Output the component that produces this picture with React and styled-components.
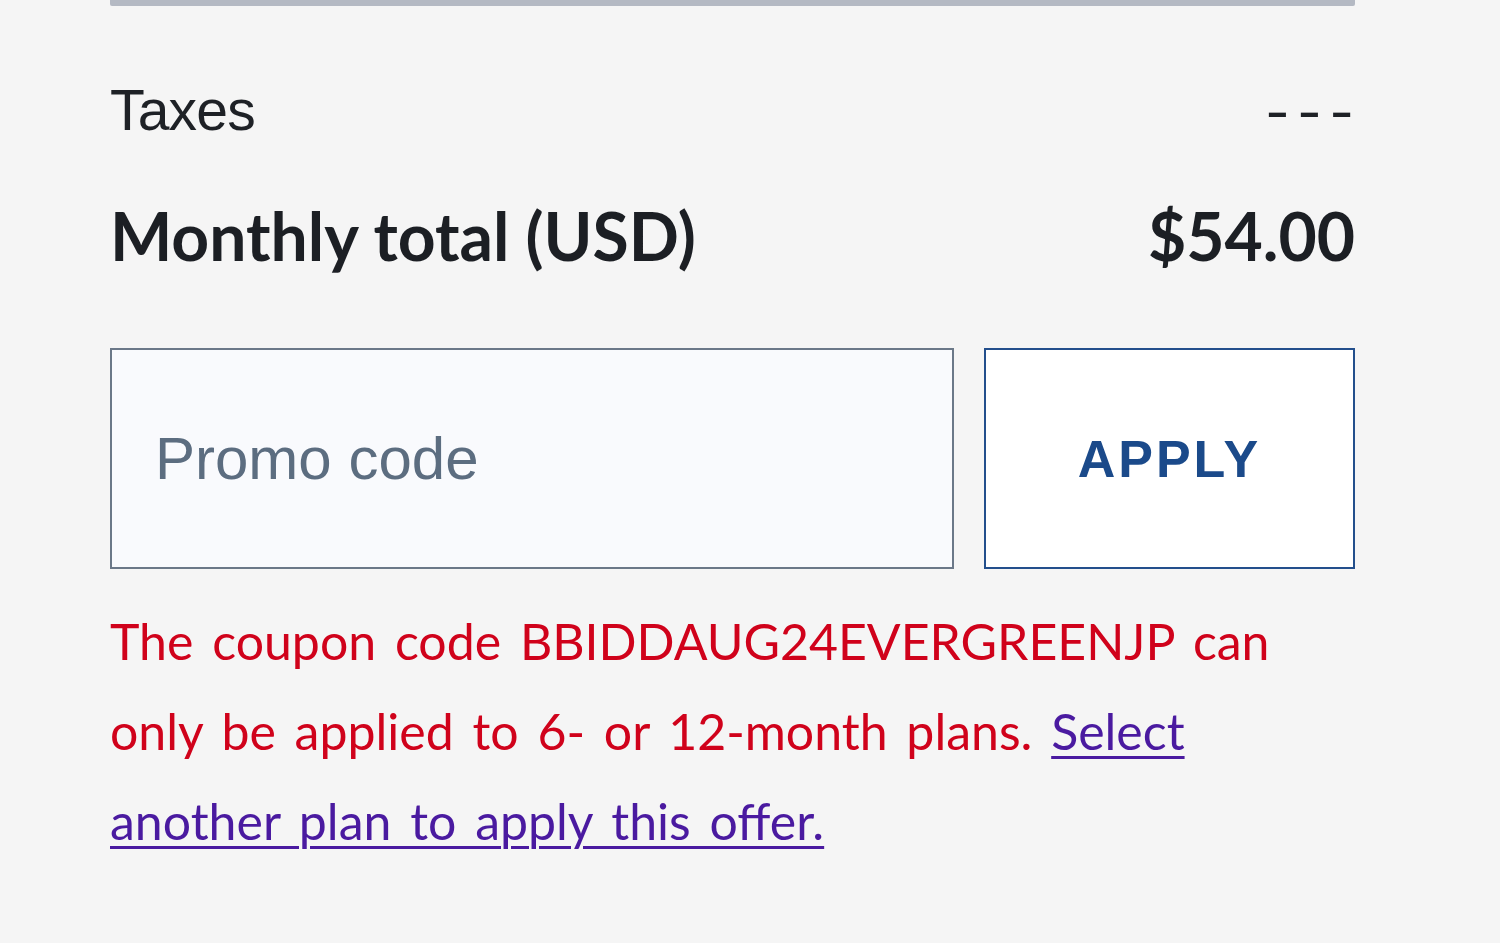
import React from "react";
import styled, { createGlobalStyle } from "styled-components";

const GlobalStyle = createGlobalStyle`
  html, body {
    margin: 0;
    padding: 0;
    background: #f5f5f5;
  }
`;

const Page = styled.div`
  width: 1500px;
  height: 943px;
  background: #f5f5f5;
  overflow: hidden;
`;

const Summary = styled.div`
  width: 1245px;
  margin-left: 110px;
  display: flex;
  flex-direction: column;
`;

const Divider = styled.div`
  height: 6px;
  background: #b4b9c3;
  border-radius: 0 0 2px 2px;
`;

const Row = styled.div`
  display: flex;
  justify-content: space-between;
  align-items: center;
  height: ${(p) => p.h}px;
  margin-top: ${(p) => p.mt || 0}px;
`;

const TaxLabel = styled.span`
  font-family: "Liberation Sans", Arial, sans-serif;
  font-size: 57px;
  letter-spacing: -0.8px;
  color: #1e2126;
`;

const Dashes = styled.span`
  font-family: "Liberation Sans", Arial, sans-serif;
  font-size: 56px;
  color: #1e2126;
  letter-spacing: 7px;
  margin-right: -7px;
  transform: scaleX(1.25);
  transform-origin: right center;
`;

const TotalLabel = styled.span`
  font-family: Lato, "Noto Sans", sans-serif;
  font-weight: 700;
  font-size: 66px;
  color: #1c1f24;
`;

const PromoRow = styled.div`
  display: flex;
  gap: 30px;
  margin-top: 58px;
  height: 221px;
`;

const PromoInput = styled.input`
  flex: 1;
  box-sizing: border-box;
  height: 100%;
  border: 2px solid #6b7888;
  background: #f9fafd;
  padding: 0 0 0 43px;
  font-family: "Liberation Sans", Arial, sans-serif;
  font-size: 60px;
  color: #1e2126;
  outline: none;

  &::placeholder {
    color: #5c6d80;
  }
`;

const ApplyButton = styled.button`
  width: 371px;
  box-sizing: border-box;
  height: 100%;
  border: 2px solid #234f8c;
  background: #ffffff;
  color: #1b4a8a;
  font-family: "Liberation Sans", Arial, sans-serif;
  font-weight: 700;
  font-size: 52px;
  letter-spacing: 3px;
  padding: 0;
  cursor: pointer;
`;

const ErrorText = styled.p`
  margin: 27px 0 0;
  width: 1200px;
  font-family: Lato, "Noto Sans", sans-serif;
  font-size: 50px;
  line-height: 90px;
  word-spacing: 6px;
  color: #d0021b;

  a {
    color: #4a1aa0;
    text-decoration: underline;
    text-decoration-thickness: 3px;
    text-underline-offset: 6px;
  }
`;

export default function App() {
  return (
    <Page>
      <GlobalStyle />
      <Summary>
        <Divider />
        <Row h={120} mt={44}>
          <TaxLabel>Taxes</TaxLabel>
          <Dashes>---</Dashes>
        </Row>
        <Row h={110} mt={10}>
          <TotalLabel>Monthly total (USD)</TotalLabel>
          <TotalLabel>$54.00</TotalLabel>
        </Row>
        <PromoRow>
          <PromoInput placeholder="Promo code" />
          <ApplyButton>APPLY</ApplyButton>
        </PromoRow>
        <ErrorText>
          The coupon code BBIDDAUG24EVERGREENJP can only be applied to 6- or
          12-month plans. <a href="#">Select another plan to apply this offer.</a>
        </ErrorText>
      </Summary>
    </Page>
  );
}
